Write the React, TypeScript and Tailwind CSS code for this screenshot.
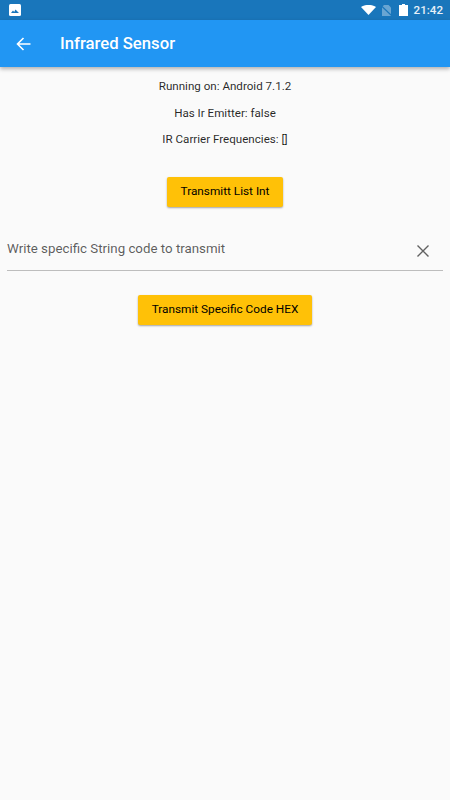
import * as React from 'react';

function StatusBar() {
  return (
    <div className="flex h-5 items-center bg-[#1976bb] pl-[9px] pr-[7px] text-white">
      <svg width="12" height="12" viewBox="0 0 12 12">
        <rect width="12" height="12" rx="1.5" fill="#fff" />
        <path d="M2 9 L4 6.5 L5.2 8 L6.5 5.5 L10 9 Z" fill="#1976bb" />
      </svg>
      <div className="ml-auto flex items-center">
        <svg width="15" height="10" viewBox="0 0 15 10">
          <path d="M0 2 C4 -0.8 11 -0.8 15 2 L7.5 10 Z" fill="#fff" />
        </svg>
        <svg width="11" height="11" viewBox="0 0 11 11" className="ml-[5px]">
          <path d="M3 0 H7.5 L10 2.5 V11 H1 V2 Z" fill="#fff" fillOpacity="0.35" />
          <path d="M0.5 1 L10.5 10.5" stroke="#1976bb" strokeWidth="1.1" />
        </svg>
        <svg width="9" height="12" viewBox="0 0 9 12" className="ml-[7px]">
          <path d="M3 0 H6 V1 H9 V12 H0 V1 H3 Z" fill="#fff" />
        </svg>
        <span className="ml-[6px] text-[11.6px] font-medium leading-5 text-white/90">21:42</span>
      </div>
    </div>
  );
}

function AmberButton({ label }: { label: string }) {
  return (
    <button className="flex h-[30px] items-center justify-center rounded-[2px] bg-[#ffc107] px-[13.5px] text-[11.8px] font-normal text-black shadow-[0_1px_2px_rgba(0,0,0,0.35)]">
      {label}
    </button>
  );
}

export default function App() {
  return (
    <div className="flex h-[800px] w-[450px] flex-col bg-[#fafafa] font-['Roboto',sans-serif] text-[11.6px] text-black/85">
      <StatusBar />
      <header className="z-10 flex h-[47px] items-center bg-[#2196f3] pl-[15px] shadow-[0_2px_4px_rgba(0,0,0,0.3)]">
        <svg width="18" height="18" viewBox="0 0 18 18" fill="none" stroke="#fff" strokeWidth="1.6">
          <path d="M15.5 9 H2.5 M8.5 3 L2.5 9 L8.5 15" />
        </svg>
        <h1 className="ml-[27px] text-[16.7px] font-medium text-white">Infrared Sensor</h1>
      </header>
      <main className="flex flex-col items-center">
        <p className="mt-[11px] leading-[16px]">Running on: Android 7.1.2</p>
        <p className="mt-[11px] leading-[16px]">Has Ir Emitter: false</p>
        <p className="mt-[10px] leading-[16px]">IR Carrier Frequencies: []</p>
        <div className="mt-[30px]">
          <AmberButton label="Transmitt List Int" />
        </div>
        <div className="mt-[20px] flex h-[44px] w-[436px] items-start justify-between border-b border-[#bdbdbd] pt-[14px]">
          <span className="text-[13.3px] leading-[16px] text-black/65">Write specific String code to transmit</span>
          <svg width="12" height="12" viewBox="0 0 12 12" className="mr-[14px] mt-[4px]" stroke="#616161" strokeWidth="1.4">
            <path d="M0.5 0.5 L11.5 11.5 M11.5 0.5 L0.5 11.5" />
          </svg>
        </div>
        <div className="mt-[24px]">
          <AmberButton label="Transmit Specific Code HEX" />
        </div>
      </main>
    </div>
  );
}
